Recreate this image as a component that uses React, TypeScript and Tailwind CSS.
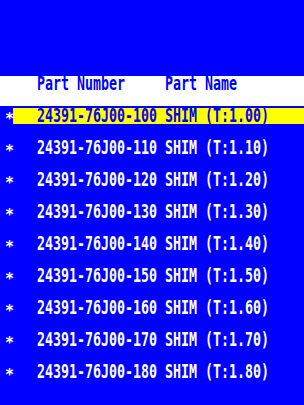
import React from "react";

const rows = [
  ["24391-76J00-100", "SHIM (T:1.00)"],
  ["24391-76J00-110", "SHIM (T:1.10)"],
  ["24391-76J00-120", "SHIM (T:1.20)"],
  ["24391-76J00-130", "SHIM (T:1.30)"],
  ["24391-76J00-140", "SHIM (T:1.40)"],
  ["24391-76J00-150", "SHIM (T:1.50)"],
  ["24391-76J00-160", "SHIM (T:1.60)"],
  ["24391-76J00-170", "SHIM (T:1.70)"],
  ["24391-76J00-180", "SHIM (T:1.80)"],
];

const font = "font-['DejaVu_Sans_Mono',monospace] font-bold text-[13.29px] leading-4 whitespace-pre";

export default function App() {
  return (
    <div className={`w-[304px] h-[405px] bg-[#0000ff] overflow-hidden ${font}`}>
      <div className="h-[76px]" />
      <div className="h-[30px] bg-white pl-[37px] text-[#0000ff]">
        <div className="h-4 scale-y-[1.45]">{"Part Number     Part Name"}</div>
      </div>
      <div className="flex flex-col gap-4 pt-[2px]">
        {rows.map(([num, name], i) => {
          const sel = i === 0;
          return (
            <div key={num} className="flex h-4">
              <div className="w-2 ml-[5px] text-white text-[15px] leading-4 translate-y-[3px]">*</div>
              <div
                className={`flex-1 pl-6 ${sel ? "bg-[#ffff00] text-[#0000ff]" : "text-white"}`}
              >
                <div className="h-4 scale-y-[1.45]">{`${num} ${name}`}</div>
              </div>
            </div>
          );
        })}
      </div>
    </div>
  );
}
